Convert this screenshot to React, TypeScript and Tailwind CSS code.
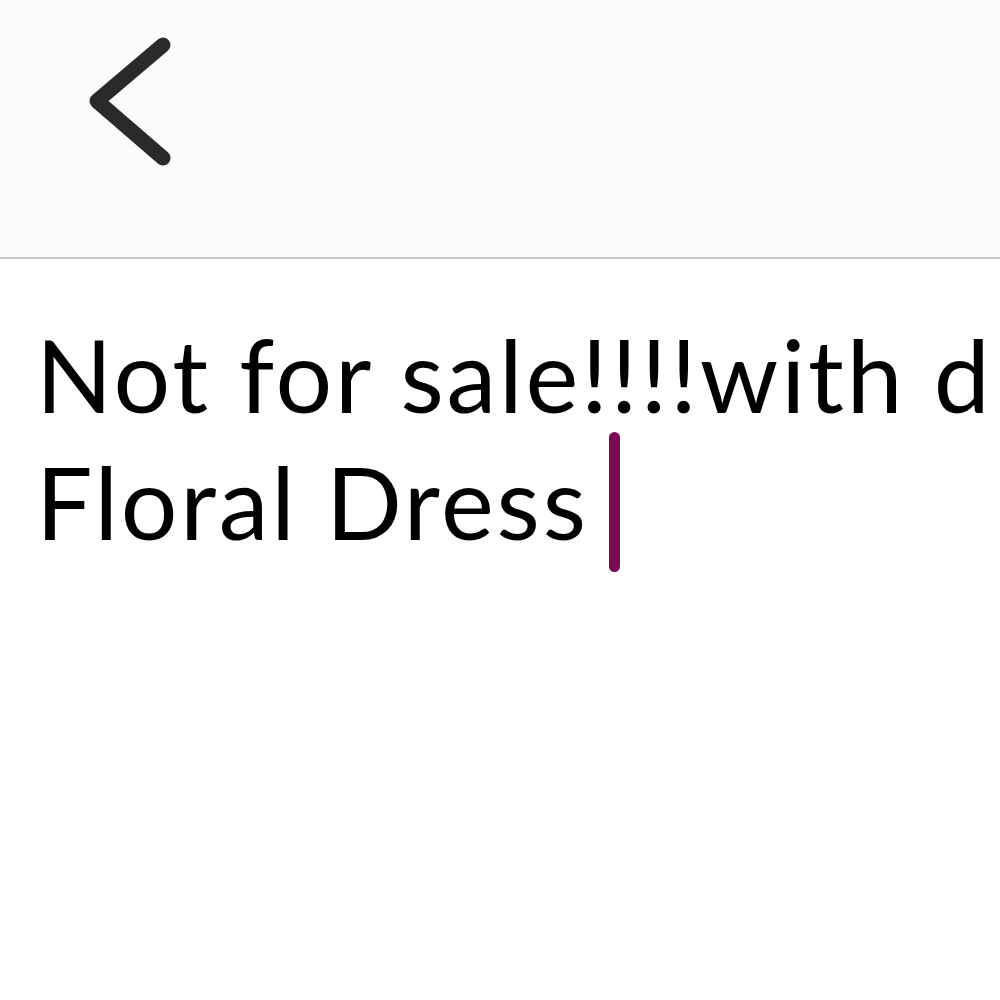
import React from "react";

function BackChevron() {
  return (
    <svg width="100" height="145" viewBox="0 0 100 145" fill="none" className="block">
      <polyline
        points="83,15 17,71 83,128"
        stroke="#2a2a2a"
        strokeWidth="15"
        strokeLinecap="round"
        strokeLinejoin="round"
      />
    </svg>
  );
}

export default function App() {
  return (
    <div className="w-[1000px] h-[1000px] bg-white overflow-hidden" style={{ fontFamily: "Lato, 'Noto Sans', sans-serif" }}>
      <header className="h-[259px] bg-[#fcfafb] border-b-2 border-[#c4c4c4] pl-[80px] pt-[30px]">
        <BackChevron />
      </header>

      <div className="pl-[36px] pt-[52px] text-[100px] leading-[127px] tracking-[2.8px] text-black">
        <div className="whitespace-nowrap">Not for sale!!!!with d</div>
        <div className="whitespace-nowrap">
          Floral Dress
          <span className="inline-block w-[11px] h-[140px] ml-[20px] -mt-[10px] -mb-[10px] rounded-full bg-[#7b0a55] align-[-22px]" />
        </div>
      </div>
    </div>
  );
}
